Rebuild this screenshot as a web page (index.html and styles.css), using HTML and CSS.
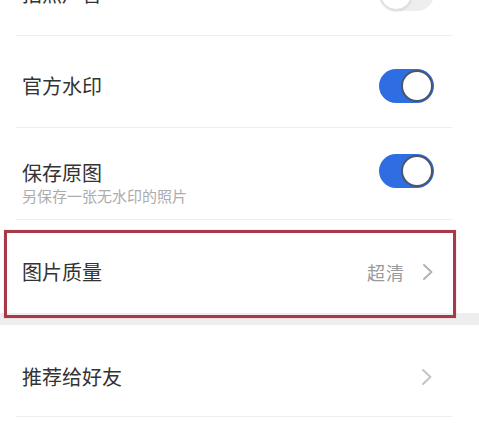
FILE: index.html
```html
<!DOCTYPE html>
<html lang="zh-CN">
<head>
<meta charset="utf-8">
<link rel="stylesheet" href="styles.css">
</head>
<body>
<div class="screen">
  <section class="group">
    <div class="row row-partial">
      <span class="title">拍照声音</span>
      <span class="switch off"><span class="knob"></span></span>
    </div>
    <div class="row row-one">
      <span class="title">官方水印</span>
      <span class="switch on"><span class="knob"></span></span>
    </div>
    <div class="row row-two">
      <div class="text">
        <div class="title">保存原图</div>
        <div class="sub">另保存一张无水印的照片</div>
      </div>
      <span class="switch on top"><span class="knob"></span></span>
    </div>
    <div class="row row-quality">
      <span class="title">图片质量</span>
      <span class="value">超清</span>
      <svg class="chev" width="12" height="18" viewBox="0 0 12 18"><path d="M2 2 L9.5 9 L2 16" fill="none" stroke="#b4b4b4" stroke-width="2" stroke-linecap="round" stroke-linejoin="round"/></svg>
      <div class="highlight"></div>
    </div>
  </section>
  <div class="gap"></div>
  <section class="group">
    <div class="row row-last">
      <span class="title">推荐给好友</span>
      <svg class="chev light" width="12" height="18" viewBox="0 0 12 18"><path d="M2 2 L9.5 9 L2 16" fill="none" stroke="#c4c4c4" stroke-width="2" stroke-linecap="round" stroke-linejoin="round"/></svg>
    </div>
  </section>
</div>
</body>
</html>
```

FILE: styles.css
```css
html, body {
  margin: 0;
  padding: 0;
  background: #ffffff;
}
body {
  font-family: "Noto Sans CJK SC", "Noto Sans", sans-serif;
  color: #333333;
  overflow: hidden;
  width: 479px;
  height: 425px;
}
.screen {
  width: 479px;
}
.group {
  background: #ffffff;
}
.row {
  position: relative;
  display: flex;
  align-items: center;
  height: 92px;
  box-sizing: border-box;
  margin: 0 27px 0 16px;
  padding: 8px 18px 0 6px;
  border-bottom: 1px solid #efefef;
}
.row-partial {
  margin-top: -56px;
}
.title {
  font-size: 20px;
  line-height: 24px;
  color: #333333;
  flex: 1;
}
.row-two {
  align-items: flex-start;
  padding-top: 0;
}
.row-two .text {
  flex: 1;
  padding-top: 34px;
}
.row-two .title {
  line-height: 22px;
}
.sub {
  font-size: 15px;
  line-height: 20px;
  margin-top: 2px;
  color: #acacac;
}
.switch {
  position: relative;
  width: 55px;
  height: 34px;
  border-radius: 17px;
  box-sizing: border-box;
  flex: none;
}
.switch.on {
  background: #2f6de3;
}
.switch.off {
  background: #eeeeee;
}
.switch.top {
  margin-top: 26px;
}
.knob {
  position: absolute;
  top: 1px;
  width: 32px;
  height: 32px;
  border-radius: 50%;
  background: #ffffff;
  box-sizing: border-box;
}
.switch.on .knob {
  right: 1px;
  border: 2px solid #4a5566;
}
.switch.off .knob {
  left: 1px;
  border: 1px solid #e2e2e2;
  box-shadow: 0 1px 3px rgba(0,0,0,0.12);
}
.row-quality {
  border-bottom: none;
  height: 93px;
  padding-top: 10px;
}
.value {
  font-size: 18px;
  letter-spacing: 1px;
  color: #9a9a9a;
  margin-right: 17px;
}
.chev {
  flex: none;
  display: block;
}
.highlight {
  position: absolute;
  left: -12px;
  top: 10px;
  width: 452px;
  height: 88px;
  box-sizing: border-box;
  border: 3px solid #a73a48;
  box-shadow: 0 0 1px rgba(200,60,80,0.5);
  z-index: 2;
}
.gap {
  height: 12px;
  background: #eeeef0;
}
.row-last {
  padding-top: 12px;
}
.chev.light {
  margin-right: 1px;
}
```
